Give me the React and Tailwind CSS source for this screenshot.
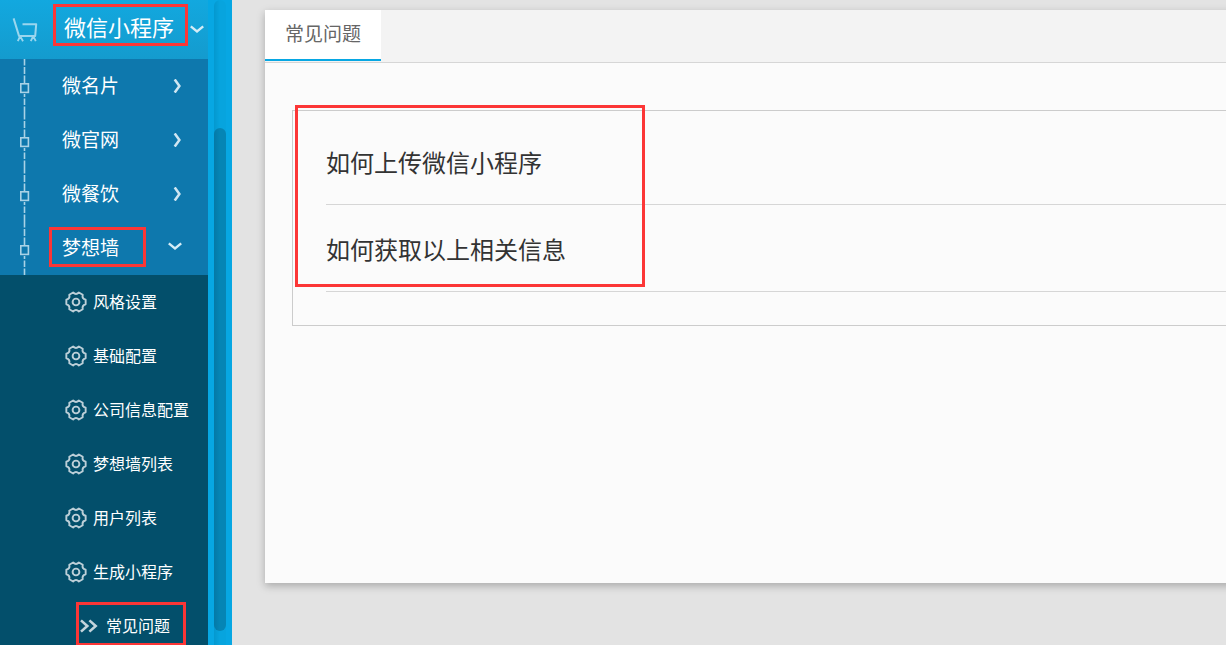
const groups = [
  { name: "微名片" },
  { name: "微官网" },
  { name: "微餐饮" },
  { name: "梦想墙", open: true, marked: true },
];

const pages = ["风格设置", "基础配置", "公司信息配置", "梦想墙列表", "用户列表", "生成小程序"];

const questions = ["如何上传微信小程序", "如何获取以上相关信息"];

function Mark({ className }) {
  return <span aria-hidden="true" className={`pointer-events-none absolute border-3 border-[#fc3636] ${className}`} />;
}

function CartIcon() {
  return (
    <svg aria-hidden="true" width="26" height="26" viewBox="0 0 26 26" fill="none" stroke="#9ad6ee" strokeWidth="2">
      <path d="M1.6 1.4 L7 18.9 H23.2 L24.2 7.2 H10.5" strokeLinejoin="round" />
      <path d="M8 19.5 L5.8 24.2 M8.4 19.5 L11 24.2 M21 19.5 L18.8 24.2 M21.4 19.5 L23.8 24.2" strokeWidth="1.8" />
    </svg>
  );
}

function ChevronDown() {
  return (
    <svg aria-hidden="true" width="14" height="9" viewBox="0 0 14 9" fill="none" stroke="#d5ecf6" strokeWidth="2.4">
      <path d="M0.8 1.4 L7 6.4 L13.2 1.4" />
    </svg>
  );
}

function ChevronRight() {
  return (
    <svg aria-hidden="true" width="9" height="14" viewBox="0 0 9 14" fill="none" stroke="#cfe6f2" strokeWidth="2.5">
      <path d="M1.7 0.4 L6.4 7 L1.7 13.6" />
    </svg>
  );
}

function GearIcon() {
  return (
    <svg aria-hidden="true" width="22" height="22" viewBox="-11 -11 22 22" fill="none" stroke="#bccfd8" strokeWidth="1.9" strokeLinejoin="round">
      <path d="M9.65 -2.23 V2.23 Q5.72 3.3 6.75 7.24 L2.89 9.47 Q0 6.6 -2.89 9.47 L-6.75 7.24 Q-5.72 3.3 -9.65 2.23 V-2.23 Q-5.72 -3.3 -6.75 -7.24 L-2.89 -9.47 Q0 -6.6 2.89 -9.47 L6.75 -7.24 Q5.72 -3.3 9.65 -2.23 Z" />
      <circle r="3.4" />
    </svg>
  );
}

function DoubleChevron() {
  return (
    <svg aria-hidden="true" width="18" height="14" viewBox="0 0 18 14" fill="none" stroke="#c3d4dc" strokeWidth="2.6">
      <path d="M1 1.4 L7.3 7 L1 12.6 M9.4 1.4 L15.7 7 L9.4 12.6" />
    </svg>
  );
}

function Timeline() {
  return (
    <svg aria-hidden="true" width="10" height="54" viewBox="0 0 10 54" fill="none" stroke="#a9d2e6">
      <path d="M4.5 0 V6.5 M4.5 8 V15 M4.5 16.5 V24 M4.5 35 V38 M4.5 39.5 V46 M4.5 47.5 V54" strokeWidth="1.6" />
      <rect x="0.8" y="24.8" width="7.6" height="8.6" strokeWidth="1.6" />
    </svg>
  );
}

export default function App() {
  return (
    <div className="flex h-screen overflow-hidden bg-[#e3e3e3] font-['Noto_Sans_CJK_SC',sans-serif]">
      <aside className="flex shrink-0 bg-[#07a7e3]">
        <nav className="w-52 bg-[#034f6b] text-white">
          <button type="button" className="flex h-[59px] w-full items-center bg-linear-to-b from-[#12a8df] to-[#149bce] pl-3">
            <CartIcon />
            <span className="relative ml-[26px] pb-2 text-[22px] leading-8">
              微信小程序
              <Mark className="-top-[6px] -right-[14px] -left-[11px] h-[42px]" />
            </span>
            <span className="ml-4">
              <ChevronDown />
            </span>
          </button>
          <ul className="bg-[#0e78ad]">
            {groups.map((g) => (
              <li key={g.name}>
                <button type="button" aria-expanded={!!g.open} className="flex h-[54px] w-full items-center pr-[26px] pl-5 text-[19px]">
                  <Timeline />
                  <span className="relative ml-8 pb-0.5 leading-7">
                    {g.name}
                    {g.marked && <Mark className="-top-[6px] -right-[27px] -bottom-1 -left-[13px]" />}
                  </span>
                  <span className={g.open ? "ml-auto pb-1" : "ml-auto"}>{g.open ? <ChevronDown /> : <ChevronRight />}</span>
                </button>
              </li>
            ))}
          </ul>
          <ul className="text-base">
            {pages.map((p) => (
              <li key={p}>
                <a href="#" className="flex h-[54px] items-center gap-[6px] pl-[65px]">
                  <GearIcon />
                  <span className="pb-0.5">{p}</span>
                </a>
              </li>
            ))}
            <li>
              <a href="#" aria-current="page" className="relative flex h-[54px] items-center gap-2 pl-20">
                <DoubleChevron />
                <span className="pb-0.5">常见问题</span>
                <Mark className="top-[3px] left-[76px] h-11 w-[110px]" />
              </a>
            </li>
          </ul>
        </nav>
        <div className="w-6 px-[6px]">
          <div className="h-full rounded-t-full bg-linear-to-r from-[#0498cf] via-[#07a4de] to-[#07a4de] pt-32">
            <div className="h-[503px] rounded-full bg-linear-to-r from-[#0479a6] via-[#0585b5] to-[#0585b5]" />
          </div>
        </div>
      </aside>
      <main className="-mr-4 min-w-0 flex-1 pt-[10px] pb-[62px] pl-[33px]">
        <section className="h-full bg-[#fbfbfb] shadow-[0_3px_8px_rgba(0,0,0,0.25)]">
          <header className="flex h-[53px] items-start border-b border-[#d6d6d6] bg-[#f3f3f3]">
            <button type="button" className="h-[51px] border-b-2 border-[#07a7e3] bg-white px-5 pb-0.5 text-[19px] text-[#666]">
              常见问题
            </button>
          </header>
          <div className="pt-[47px] pl-[27px]">
            <div className="relative border-y border-l border-[#ccc] pt-[7px] pb-[33px] pl-[33px]">
              <ul>
                {questions.map((q) => (
                  <li key={q} className="flex h-[87px] items-center border-b border-[#d6d6d6] pt-0.5 text-2xl text-[#333]">
                    {q}
                  </li>
                ))}
              </ul>
              <Mark className="-top-[6px] left-[2px] h-[182px] w-[350px]" />
            </div>
          </div>
        </section>
      </main>
    </div>
  );
}
